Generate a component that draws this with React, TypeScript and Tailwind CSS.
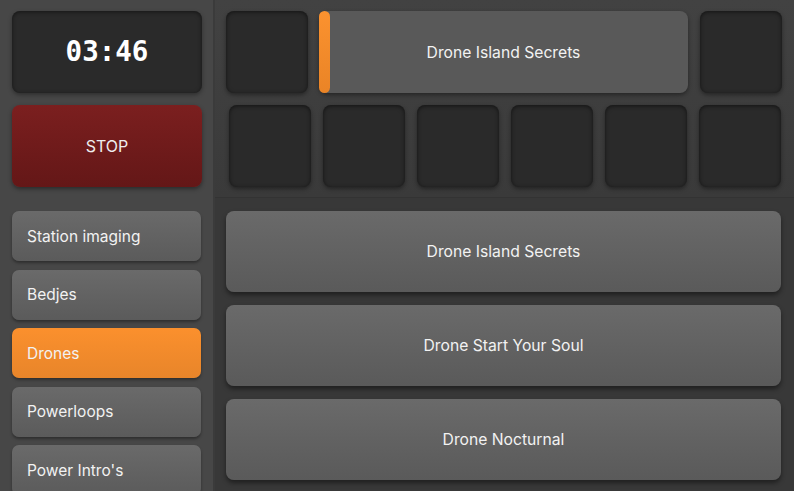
import React from "react";

const font = { fontFamily: "Inter, 'Liberation Sans', sans-serif" };

function SideBtn({ label, active }: { label: string; active?: boolean }) {
  return (
    <div
      className={
        "h-[50px] w-[189px] shrink-0 rounded-[7px] flex items-center pl-[15px] pt-[1px] text-[15.5px] text-[#f2f2f2] shadow-[0_2px_3px_rgba(0,0,0,0.35)] " +
        (active
          ? "bg-gradient-to-b from-[#fb902d] to-[#e8852a]"
          : "bg-gradient-to-b from-[#6a6a6a] to-[#5b5b5b]")
      }
    >
      {label}
    </div>
  );
}

function DarkBox({ className = "" }: { className?: string }) {
  return (
    <div
      className={
        "h-[82px] w-[82px] shrink-0 rounded-[8px] bg-[#2a2a2a] shadow-[inset_0_1px_4px_rgba(0,0,0,0.55),0_2px_4px_rgba(0,0,0,0.4)] " +
        className
      }
    />
  );
}

function BigBtn({ label }: { label: string }) {
  return (
    <div className="h-[81px] w-[555px] shrink-0 rounded-[8px] bg-gradient-to-b from-[#6a6a6a] to-[#5a5a5a] flex items-center justify-center pt-[1px] text-[15.7px] text-[#f2f2f2] shadow-[0_3px_5px_rgba(0,0,0,0.45)]">
      {label}
    </div>
  );
}

export default function App() {
  return (
    <div className="flex h-[491px] w-[794px] overflow-hidden bg-[#383838]" style={font}>
      <div className="w-[213px] shrink-0 bg-[#474747] flex flex-col pl-[12px] pt-[11px] overflow-hidden">
        <div className="h-[82px] w-[190px] shrink-0 rounded-[8px] bg-[#2a2a2a] flex items-center justify-center shadow-[inset_0_1px_4px_rgba(0,0,0,0.5),0_2px_4px_rgba(0,0,0,0.35)]">
          <span
            className="text-[27.5px] font-bold text-white"
            style={{ fontFamily: "'DejaVu Sans Mono', monospace" }}
          >
            03:46
          </span>
        </div>
        <div className="mt-[12px] h-[82px] w-[190px] shrink-0 rounded-[8px] bg-gradient-to-b from-[#7b1f1f] to-[#641717] flex items-center justify-center text-[16px] text-[#eeeeee] shadow-[0_2px_4px_rgba(0,0,0,0.4)]">
          STOP
        </div>
        <div className="mt-[24px] shrink-0 flex flex-col gap-[8.5px]">
          <SideBtn label="Station imaging" />
          <SideBtn label="Bedjes" />
          <SideBtn label="Drones" active />
          <SideBtn label="Powerloops" />
          <SideBtn label="Power Intro's" />
        </div>
      </div>
      <div className="w-[2px] shrink-0 bg-[#3b3b3b]" />
      <div className="flex-1 flex flex-col">
        <div className="h-[198px] shrink-0 bg-gradient-to-b from-[#424242] to-[#3a3a3a] pt-[11px] border-b border-[#333333]">
          <div className="flex pl-[11px] gap-[11px]">
            <DarkBox />
            <div className="relative h-[82px] w-[369px] shrink-0 rounded-[8px] bg-[#595959] flex items-center justify-center pt-[1px] text-[15.7px] text-[#f2f2f2] shadow-[0_2px_4px_rgba(0,0,0,0.4)]">
              <div className="absolute left-0 top-0 bottom-0 w-[11px] rounded-[6px] bg-gradient-to-b from-[#fb922f] to-[#ea8426]" />
              Drone Island Secrets
            </div>
            <DarkBox className="ml-[1px]" />
          </div>
          <div className="flex pl-[14px] gap-[12px] mt-[12px]">
            <DarkBox />
            <DarkBox />
            <DarkBox />
            <DarkBox />
            <DarkBox />
            <DarkBox />
          </div>
        </div>
        <div className="flex-1 flex flex-col pl-[11px] pt-[13px] gap-[13px]">
          <BigBtn label="Drone Island Secrets" />
          <BigBtn label="Drone Start Your Soul" />
          <BigBtn label="Drone Nocturnal" />
        </div>
      </div>
    </div>
  );
}
